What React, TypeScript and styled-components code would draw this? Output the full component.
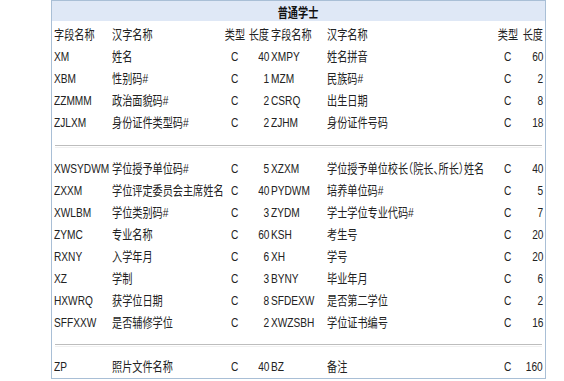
import React from "react";
import styled, { createGlobalStyle } from "styled-components";

const Global = createGlobalStyle`
  html, body { margin: 0; padding: 0; background: #fff; }
  body { font-family: "Liberation Sans", "Noto Sans CJK SC", sans-serif; color: #222; }
`;

const Page = styled.div`
  width: 564px;
  height: 381px;
  padding-left: 51px;
  box-sizing: border-box;
`;

const Panel = styled.div`
  width: 495px;
  height: 379px;
  box-sizing: border-box;
  border: 1px solid #a9bfd6;
  display: flex;
  flex-direction: column;
`;

const Title = styled.div`
  height: 21px;
  background: #dfe8f6;
  display: flex;
  align-items: center;
  justify-content: center;
  font-size: 13px;
  font-weight: bold;
  color: #111;
`;

const Body = styled.div`
  padding: 3px 1px 0 2px;
  display: flex;
  flex-direction: column;
`;

const Row = styled.div`
  display: grid;
  grid-template-columns: 58px 110px 25px 24px 56px 169px 23px 26px;
  height: 22px;
  align-items: center;
`;

const justify = { left: "flex-start", center: "center", right: "flex-end" };

const Cell = styled.div<{ $align: "left" | "center" | "right" }>`
  display: flex;
  justify-content: ${(p) => justify[p.$align]};
  white-space: nowrap;
  font-size: 13px;
  line-height: 22px;
  min-width: 0;
  ${(p) => (p.$align === "right" ? "padding-right: 2px;" : "")}
`;

const Txt = styled.span<{ $align: "left" | "center" | "right" }>`
  display: inline-block;
  flex: none;
  transform: scaleX(0.78);
  transform-origin: ${(p) => p.$align} center;
  font-feature-settings: "halt";
`;

const Sep = styled.div<{ $h: number }>`
  height: ${(p) => p.$h}px;
  display: flex;
  align-items: center;
  padding: 0 2px 0 1px;
  &::before {
    content: "";
    flex: 1;
    height: 1px;
    border-top: 1px solid #bdbdbd;
    border-bottom: 1px solid #f0f0f0;
  }
`;

type R = [string, string, string, string, string, string, string, string];

const aligns: ("left" | "center" | "right")[] = [
  "left", "left", "center", "right", "left", "left", "center", "right",
];

const header: R = ["字段名称", "汉字名称", "类型", "长度", "字段名称", "汉字名称", "类型", "长度"];

const sections: R[][] = [
  [
    ["XM", "姓名", "C", "40", "XMPY", "姓名拼音", "C", "60"],
    ["XBM", "性别码#", "C", "1", "MZM", "民族码#", "C", "2"],
    ["ZZMMM", "政治面貌码#", "C", "2", "CSRQ", "出生日期", "C", "8"],
    ["ZJLXM", "身份证件类型码#", "C", "2", "ZJHM", "身份证件号码", "C", "18"],
  ],
  [
    ["XWSYDWM", "学位授予单位码#", "C", "5", "XZXM", "学位授予单位校长（院长、所长）姓名", "C", "40"],
    ["ZXXM", "学位评定委员会主席姓名", "C", "40", "PYDWM", "培养单位码#", "C", "5"],
    ["XWLBM", "学位类别码#", "C", "3", "ZYDM", "学士学位专业代码#", "C", "7"],
    ["ZYMC", "专业名称", "C", "60", "KSH", "考生号", "C", "20"],
    ["RXNY", "入学年月", "C", "6", "XH", "学号", "C", "20"],
    ["XZ", "学制", "C", "3", "BYNY", "毕业年月", "C", "6"],
    ["HXWRQ", "获学位日期", "C", "8", "SFDEXW", "是否第二学位", "C", "2"],
    ["SFFXXW", "是否辅修学位", "C", "2", "XWZSBH", "学位证书编号", "C", "16"],
  ],
  [["ZP", "照片文件名称", "C", "40", "BZ", "备注", "C", "160"]],
];

const DataRow = ({ r }: { r: R }) => (
  <Row>
    {r.map((t, i) => (
      <Cell key={i} $align={aligns[i]}>
        <Txt $align={aligns[i]}>{t}</Txt>
      </Cell>
    ))}
  </Row>
);

export default function App() {
  return (
    <Page>
      <Global />
      <Panel>
        <Title>
          <Txt $align="center">普通学士</Txt>
        </Title>
        <Body>
          <DataRow r={header} />
          {sections.map((s, si) => (
            <React.Fragment key={si}>
              {si > 0 && <Sep $h={si === 1 ? 24 : 22} />}
              {s.map((r, ri) => (
                <DataRow key={ri} r={r} />
              ))}
            </React.Fragment>
          ))}
        </Body>
      </Panel>
    </Page>
  );
}
